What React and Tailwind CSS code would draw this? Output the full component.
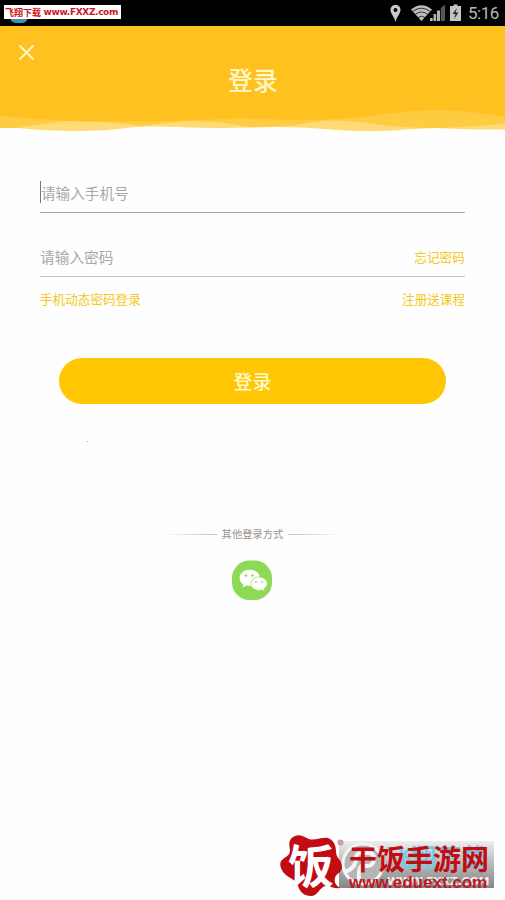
import React from "react";

function StatusBar() {
  return (
    <div className="relative flex h-[26px] items-center justify-end overflow-hidden bg-black pr-[5px]">
      <div className="absolute left-[10px] top-[8px] h-[15px] w-[18px] rounded-md bg-[#3d91b3]" />
      <div className="absolute left-[4px] top-[5px] flex h-[14px] w-[117px] items-center justify-between whitespace-nowrap bg-white px-[1px] text-[#cc1519]">
        <span className="text-[9px] font-bold leading-none">飞翔下载</span>
        <span className="mr-[2px] font-['DejaVu_Sans'] text-[9px] font-bold leading-none tracking-[-0.35px]">
          www.FXXZ.com
        </span>
      </div>
      <svg className="h-[26px] w-[78px]" viewBox="0 0 78 26">
        {/* location */}
        <path
          d="M9.500 5C6.500 5 4.500 7 4.500 10c0 3.500 4 7 5 12 1-5 5-8.500 5-12 0-3-2-5-5-5zm0 3a2 2 0 1 1 0 4 2 2 0 0 1 0-4z"
          fill="#c9c9c9"
          fillRule="evenodd"
        />
        {/* wifi */}
        <path d="M25 9.500Q35.500 1 46 9.500L35.500 21z" fill="#bdbdbd" />
        <path
          d="M26.500 11.500Q35.500 5 44.500 11.500M29 14.500Q35.500 9.500 42 14.500M32 17.500Q35.500 15 39 17.500"
          fill="none"
          stroke="#222"
          strokeWidth="0.900"
        />
        {/* signal */}
        <path d="M44 21v-3h2.700v3zM47.500 21v-7h2.700v7zM51 21V10.500h3V21z" fill="#b5b5b5" />
        <path d="M54.800 21V8l4.200-3.500V21z" fill="#565656" />
        {/* battery */}
        <path d="M64 6h3.500V4.500h4V6H75v15H64z" fill="#c4c4c4" />
        <path d="M71 8l-4.500 6h3l-1.500 5 4.500-6.500h-3z" fill="#222" />
      </svg>
      <span className="ml-[4px] w-[32px] whitespace-nowrap font-['Roboto'] text-[17px] leading-[26px] text-[#b8b8b8] tracking-[-0.5px]">
        5:16
      </span>
    </div>
  );
}

function Header() {
  return (
    <div className="relative h-[107px]">
      <svg className="absolute inset-0 h-[107px] w-[505px]" viewBox="0 0 505 107">
        <path
          d="M0 0H505V103.500Q470 104 435 102Q415 103 400 104Q365 107 325 103Q300 101 275 101Q215 103 180 101Q155 100 134 101Q110 105 75 105Q45 105 18 102H0z"
          fill="#ffdb78"
        />
        <path
          d="M0 0H505V97Q480 101 435 102Q400 102 375 98Q330 91 303 98Q285 101 268 101H250Q215 94 185 95Q160 98 140 100Q100 94 66 95Q40 98 18 102H0z"
          fill="#ffcb40"
        />
        <path
          d="M0 0H505V91Q470 84 432 84Q390 86 355 92Q300 96 245 92Q150 97 65 95Q30 92 0 90z"
          fill="#ffc11f"
        />
      </svg>
      <div className="relative flex h-full justify-center pt-[35px]">
        <button className="absolute left-[18px] top-[18px]" aria-label="close">
          <svg className="size-[17px]" viewBox="0 0 17 17">
            <path d="M1.500 1.500l14 14M15.500 1.500l-14 14" stroke="#fff5c8" strokeWidth="2.100" />
          </svg>
        </button>
        <h1 className="h-[36px] pl-px text-[25px] font-medium leading-[36px] text-[#fff6c4]">登录</h1>
      </div>
    </div>
  );
}

function WechatIcon() {
  return (
    <svg className="h-[41px] w-[41px]" viewBox="0 0 41 41">
      <rect x="0" y="0.500" width="40" height="39.500" rx="17.500" fill="#8ed957" />
      <path
        d="M17.800 9.800C12 9.800 7.600 13.300 7.600 18c0 2.700 1.500 5 3.700 6.400l-.5 3.200 3.600-2c1.100.3 2.200.5 3.400.5 5.700 0 10.200-3.600 10.200-8.100s-4.500-8.200-10.200-8.200z"
        fill="#fff"
      />
      <path
        d="M27 17c-4.600 0-8.300 3-8.300 6.700s3.700 6.700 8.300 6.700c1 0 2-.1 2.800-.4l2.800 1.600-.6-2.900c2-1.200 3.300-2.900 3.300-5 0-3.700-3.700-6.700-8.300-6.700z"
        fill="#fff"
        stroke="#8ed957"
        strokeWidth="0.700"
      />
      <g fill="#8ed957">
        <circle cx="14" cy="15.500" r="1.200" />
        <circle cx="20.500" cy="15.500" r="1.200" />
        <circle cx="24" cy="22" r="0.900" />
        <circle cx="30" cy="22" r="0.900" />
      </g>
    </svg>
  );
}

function Watermark() {
  return (
    <div className="absolute left-[278px] top-[832px] h-[68px] w-[227px]">
      {/* lower stamp */}
      <div className="absolute left-[61px] top-[9px] h-[47px] w-[155px] bg-linear-to-b from-[#eeeeee] to-[#858585]" />
      <svg className="absolute left-[61px] top-[9px] h-[47px] w-[48px]" viewBox="0 0 48 47">
        <circle cx="24" cy="23" r="20" fill="#b5b5b5" stroke="#f5f5f5" strokeWidth="3" />
        <path
          d="M6 31Q17 27 17 17q0-5 5-5h8q5 0 5 6t-6 7h-6q-4 1-3 15"
          fill="none"
          stroke="#f5f5f5"
          strokeWidth="4"
        />
      </svg>
      <span className="absolute left-[108px] top-[9px] whitespace-nowrap text-[25px] font-bold leading-[30px] text-[#72cce5]">
        飞翔下载
      </span>
      <span className="absolute left-[109px] top-[43px] whitespace-nowrap font-['DejaVu_Sans'] text-[11px] font-bold leading-[14px] tracking-[-0.2px] text-[#eeeeee]">
        WWW.FXXZ.COM
      </span>
      {/* upper stamp */}
      <svg className="absolute left-0 top-0 h-[68px] w-[70px]" viewBox="0 0 70 68">
        <path
          d="M17 4C22 2 26 5 31 7C37 9 44 5 50 6C56 8 58 14 58 20C58 26 64 28 64 35C64 41 58 41 57 46C56 51 58 53 62 56C56 57 51 54 47 54C41 56 40 64 33 64C26 64 22 60 20 54C18 47 10 46 6 41C2 36 1 31 4 28C8 24 12 24 12 18C11 12 10 7 17 4z"
          fill="#c20c13"
        />
        <circle cx="62.500" cy="10.500" r="2.500" fill="none" stroke="#b44b4b" strokeWidth="0.800" />
        <path d="M61.800 12V9.200h1.500v1.300h-1.500l1.500 1.500" fill="none" stroke="#b44b4b" strokeWidth="0.500" />
      </svg>
      <span className="absolute left-[10px] top-[8px] whitespace-nowrap text-[46px] font-bold leading-[47px] text-white">
        饭
      </span>
      <span className="absolute left-[71px] top-[10px] whitespace-nowrap text-[28px] font-bold leading-[32px] text-[#c20c13]">
        干饭手游网
      </span>
      <span className="absolute left-[71px] top-[42px] whitespace-nowrap font-['Liberation_Sans'] text-[17px] font-bold leading-[18px] text-[#bd1a26]">
        www.eduext.com
      </span>
    </div>
  );
}

function App() {
  return (
    <div className="relative h-[900px] w-[505px] overflow-hidden bg-[#fefefe] font-['Noto_Sans_CJK_SC',sans-serif]">
      <StatusBar />
      <Header />

      <div className="px-[40px] pt-[43px]">
        <div className="flex h-[37px] border-b border-[#a8a8a8]">
          <div className="mt-[5px] h-[22px] w-px bg-[#777777]" />
          <span className="mt-[6px] text-[14.600px] leading-[22px] text-[#a8a8a8]">请输入手机号</span>
        </div>
        <div className="flex h-[64px] items-end justify-between border-b border-[#c3c3c3] pb-[8px]">
          <span className="text-[14.700px] leading-[22px] text-[#a8a8a8]">请输入密码</span>
          <span className="text-[12.700px] leading-[22px] text-[#f2c821]">忘记密码</span>
        </div>
        <div className="flex justify-between pt-[11px] text-[12.600px] leading-[22px] text-[#f2c821]">
          <span>手机动态密码登录</span>
          <span>注册送课程</span>
        </div>
      </div>

      <button className="ml-[59px] mt-[48px] flex h-[46px] w-[387px] items-center justify-center rounded-full bg-[#ffc604] text-[19px] font-medium text-[#fff8c8]">
        登录
      </button>
      <div className="ml-[87px] mt-[37px] size-px bg-[#aaaaaa]" />

      <div className="mt-[81px] flex items-center justify-center gap-[5px]">
        <div className="h-px w-[54px] bg-linear-to-r from-transparent to-[#c5bdb8]" />
        <span className="text-[10.300px] leading-[22px] text-[#9b918b]">其他登录方式</span>
        <div className="h-px w-[54px] bg-linear-to-l from-transparent to-[#c5bdb8]" />
      </div>
      <div className="mt-[15px] flex justify-center">
        <WechatIcon />
      </div>

      <Watermark />
    </div>
  );
}

export default App;
